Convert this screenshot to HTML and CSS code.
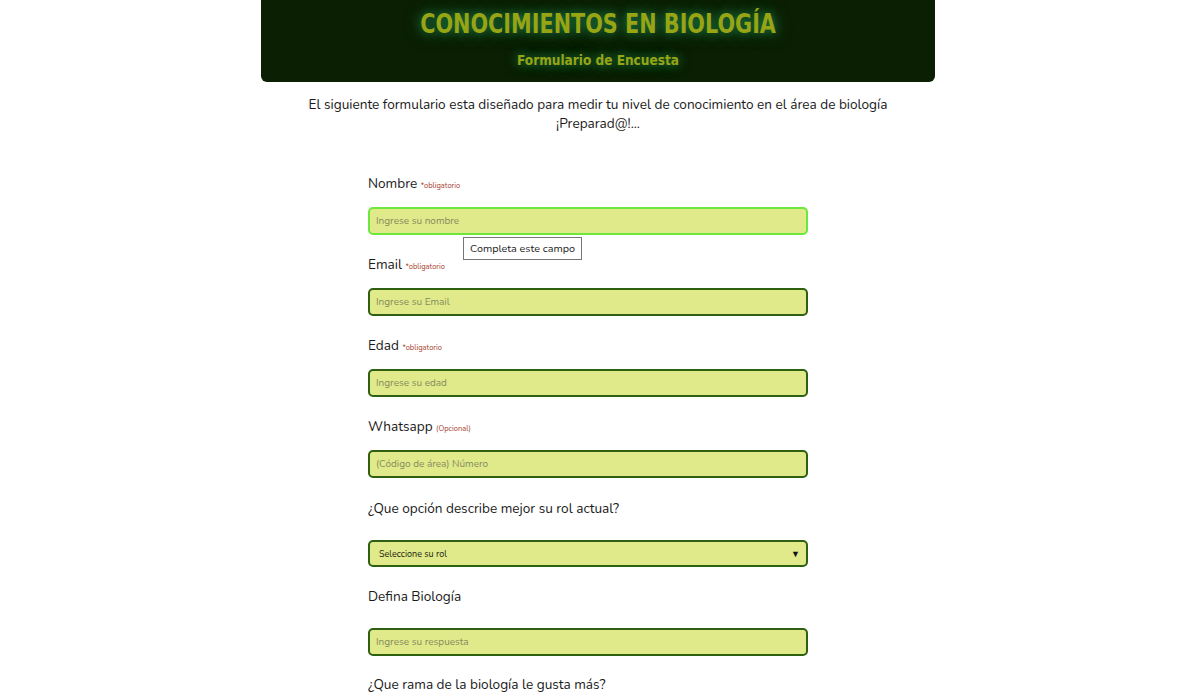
FILE: index.html
```html
<!DOCTYPE html>
<html lang="es">
<head>
<meta charset="utf-8">
<title>Conocimientos en Biología</title>
<link rel="stylesheet" href="styles.css">
</head>
<body>
<div class="page">
  <header class="banner">
    <h1 class="title"><span class="title-text">CONOCIMIENTOS EN BIOLOGÍA</span></h1>
    <p class="subtitle">Formulario de Encuesta</p>
  </header>
  <p class="intro">El siguiente formulario esta diseñado para medir tu nivel de conocimiento en el área de biología<br>¡Preparad@!...</p>
  <form class="survey">
    <div class="field">
      <label class="label" for="nombre">Nombre <span class="note">*obligatorio</span></label>
      <div class="control">
        <input class="input focused" id="nombre" type="text" placeholder="Ingrese su nombre">
        <div class="tooltip">Completa este campo</div>
      </div>
    </div>
    <div class="field">
      <label class="label" for="email">Email <span class="note">*obligatorio</span></label>
      <input class="input" id="email" type="text" placeholder="Ingrese su Email">
    </div>
    <div class="field">
      <label class="label" for="edad">Edad <span class="note">*obligatorio</span></label>
      <input class="input" id="edad" type="text" placeholder="Ingrese su edad">
    </div>
    <div class="field field-last">
      <label class="label" for="wa">Whatsapp <span class="note">(Opcional)</span></label>
      <input class="input" id="wa" type="text" placeholder="(Código de área) Número">
    </div>
    <div class="field wide">
      <label class="label" for="rol">¿Que opción describe mejor su rol actual?</label>
      <div class="select">
        <span class="select-text">Seleccione su rol</span>
        <span class="arrow">▼</span>
      </div>
    </div>
    <div class="field wide">
      <label class="label" for="def">Defina Biología</label>
      <input class="input" id="def" type="text" placeholder="Ingrese su respuesta">
    </div>
    <div class="field wide">
      <label class="label">¿Que rama de la biología le gusta más?</label>
    </div>
  </form>
</div>
</body>
</html>
```

FILE: styles.css
```css
html, body {
  margin: 0;
  padding: 0;
  background: #ffffff;
}
body {
  font-family: "Nunito", Lato, "Open Sans", sans-serif;
  color: #1c1c1c;
  overflow: hidden;
}
.page {
  width: 674px;
  margin-left: calc(50% - 339px);
}
.banner {
  background: #0b1f03;
  height: 82px;
  border-radius: 0 0 6px 6px;
  text-align: center;
  box-sizing: border-box;
  padding-top: 8px;
}
.title {
  margin: 0;
  font-family: "DejaVu Sans Condensed", "DejaVu Sans", sans-serif;
  font-stretch: condensed;
  font-weight: bold;
  font-size: 27px;
  line-height: 32px;
  color: #97a414;
  text-shadow: 0 0 10px #1f7a44, 0 0 18px #1a5e33;
}
.title-text {
  display: inline-block;
  transform: scaleX(0.855);
  white-space: nowrap;
}
.subtitle {
  margin: 11px 0 0;
  font-family: "DejaVu Sans Condensed", "DejaVu Sans", sans-serif;
  font-stretch: condensed;
  font-weight: bold;
  font-size: 13.5px;
  line-height: 18px;
  color: #97a414;
  text-shadow: 0 0 10px #1f7a44, 0 0 14px #1a5e33;
}
.intro {
  margin: 13px 0 0;
  text-align: center;
  font-size: 13.6px;
  line-height: 19px;
  color: #1a1a1a;
}
.survey {
  margin: 41px 0 0 107px;
  width: 440px;
}
.field {
  display: flex;
  flex-direction: column;
  margin-bottom: 20px;
}
.field.field-last {
  margin-bottom: 21px;
}
.field.wide {
  margin-bottom: 20px;
}
.label {
  display: block;
  height: 20px;
  font-size: 13.6px;
  line-height: 20px;
  color: #1a1a1a;
  margin-bottom: 13px;
}
.field.wide .label {
  margin-bottom: 21px;
}
.note {
  font-size: 7.5px;
  line-height: 0;
  color: #a8402e;
}
.control {
  position: relative;
}
.input {
  display: block;
  box-sizing: border-box;
  width: 440px;
  height: 28px;
  margin: 0;
  padding: 0 6px;
  border: 2px solid #2e6010;
  border-radius: 5px;
  background: #e0ea8b;
  font-family: inherit;
  font-size: 10px;
  color: #333;
  outline: none;
}
.input::placeholder {
  color: #858a5c;
}
.input.focused {
  border-color: #6be83b;
}
.field.wide .input {
  margin-bottom: -1px;
}
.tooltip {
  position: absolute;
  left: 95px;
  top: 30px;
  background: #fff;
  border: 1px solid #767676;
  font-size: 10.8px;
  line-height: 21px;
  padding: 0 6px;
  color: #222;
  white-space: nowrap;
}
.select {
  box-sizing: border-box;
  width: 440px;
  height: 27px;
  border: 2px solid #2e6010;
  border-radius: 5px;
  background: #e0ea8b;
  display: flex;
  align-items: center;
  justify-content: space-between;
  padding: 0 6px 0 9px;
}
.select-text {
  font-size: 9px;
  color: #1a1a0a;
}
.arrow {
  font-size: 9px;
  color: #111;
}
```
